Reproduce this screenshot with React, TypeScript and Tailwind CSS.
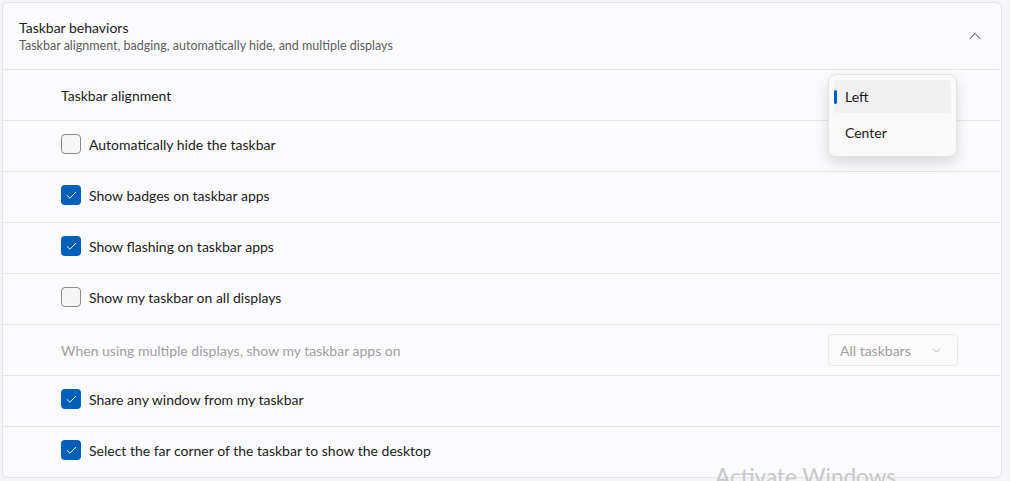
import { ChevronDown, ChevronUp, Check } from 'lucide-react';

const rows = [
    { label: 'Automatically hide the taskbar', checked: false },
    { label: 'Show badges on taskbar apps', checked: true },
    { label: 'Show flashing on taskbar apps', checked: true },
    { label: 'Show my taskbar on all displays', checked: false },
];

const rows2 = [
    { label: 'Share any window from my taskbar', checked: true },
    { label: 'Select the far corner of the taskbar to show the desktop', checked: true },
];

function CheckRow({ label, checked }: { label: string; checked: boolean }) {
    return (
        <div className="h-[51px] border-t border-[#e5e5e5] flex items-center pl-[58px] pb-[4px]">
            {checked ? (
                <div className="w-5 h-5 rounded-[4px] bg-[#005fb8] flex items-center justify-center">
                    <Check size={13} strokeWidth={1.8} className="text-white" />
                </div>
            ) : (
                <div className="w-5 h-5 rounded-[4px] border border-[#8a8a8a] bg-[#f6f6f6]" />
            )}
            <span className="ml-2 text-[14px] text-[#1b1b1b]">{label}</span>
        </div>
    );
}

export default function App() {
    return (
        <div
            className="relative w-[1010px] h-[481px] overflow-hidden bg-[#f3f5f9] pt-[2px] pl-[2px]"
            style={{ fontFamily: '"Segoe UI", Lato, "Noto Sans", sans-serif' }}
        >
            <div className="w-[1000px] h-[476px] rounded-md border border-[#e5e5e5] bg-[#fbfbfd]">
                <div className="h-[66px] flex items-center justify-between pl-[16px] pr-[16px]">
                    <div className="flex flex-col">
                        <span className="text-[14px] leading-[18px] text-[#1b1b1b]">Taskbar behaviors</span>
                        <span className="text-[12.5px] leading-[16px] text-[#5d5d5d] mt-[1px]">
                            Taskbar alignment, badging, automatically hide, and multiple displays
                        </span>
                    </div>
                    <ChevronUp size={20} strokeWidth={1.2} className="text-[#333]" />
                </div>
                <div className="h-[51px] border-t border-[#e5e5e5] flex items-center pl-[58px]">
                    <span className="text-[14px] text-[#1b1b1b]">Taskbar alignment</span>
                </div>
                {rows.map((r) => (
                    <CheckRow key={r.label} {...r} />
                ))}
                <div className="h-[51px] border-t border-[#e5e5e5] flex items-center justify-between pl-[58px] pr-[43px]">
                    <span className="text-[14px] text-[#a0a0a0]">When using multiple displays, show my taskbar apps on</span>
                    <div className="w-[130px] h-[32px] rounded-[4px] border border-[#e8e8e8] bg-[#fbfbfb] flex items-center justify-between pl-[11px] pr-[14px]">
                        <span className="text-[14px] text-[#a0a0a0]">All taskbars</span>
                        <ChevronDown size={13} strokeWidth={1.3} className="text-[#a0a0a0]" />
                    </div>
                </div>
                {rows2.map((r) => (
                    <CheckRow key={r.label} {...r} />
                ))}
            </div>

            <div className="absolute left-[828px] top-[74px] w-[129px] h-[83px] rounded-lg bg-[#f9f9f9] border border-[#e3e3e3] shadow-[0_6px_14px_rgba(0,0,0,0.14)] p-[5px]">
                <div className="relative h-[33px] rounded-[4px] bg-[#f0f0f0] flex items-center pl-[11px]">
                    <div className="absolute left-0 top-[10px] w-[3px] h-[14px] rounded-full bg-[#005fb8]" />
                    <span className="text-[14px] text-[#1b1b1b]">Left</span>
                </div>
                <div className="h-[38px] flex items-center pl-[11px]">
                    <span className="text-[14px] text-[#1b1b1b]">Center</span>
                </div>
            </div>

            <div className="absolute left-[715px] top-[466px] text-[22.5px] text-[#c8c8c8] leading-none">Activate Windows</div>
        </div>
    );
}
